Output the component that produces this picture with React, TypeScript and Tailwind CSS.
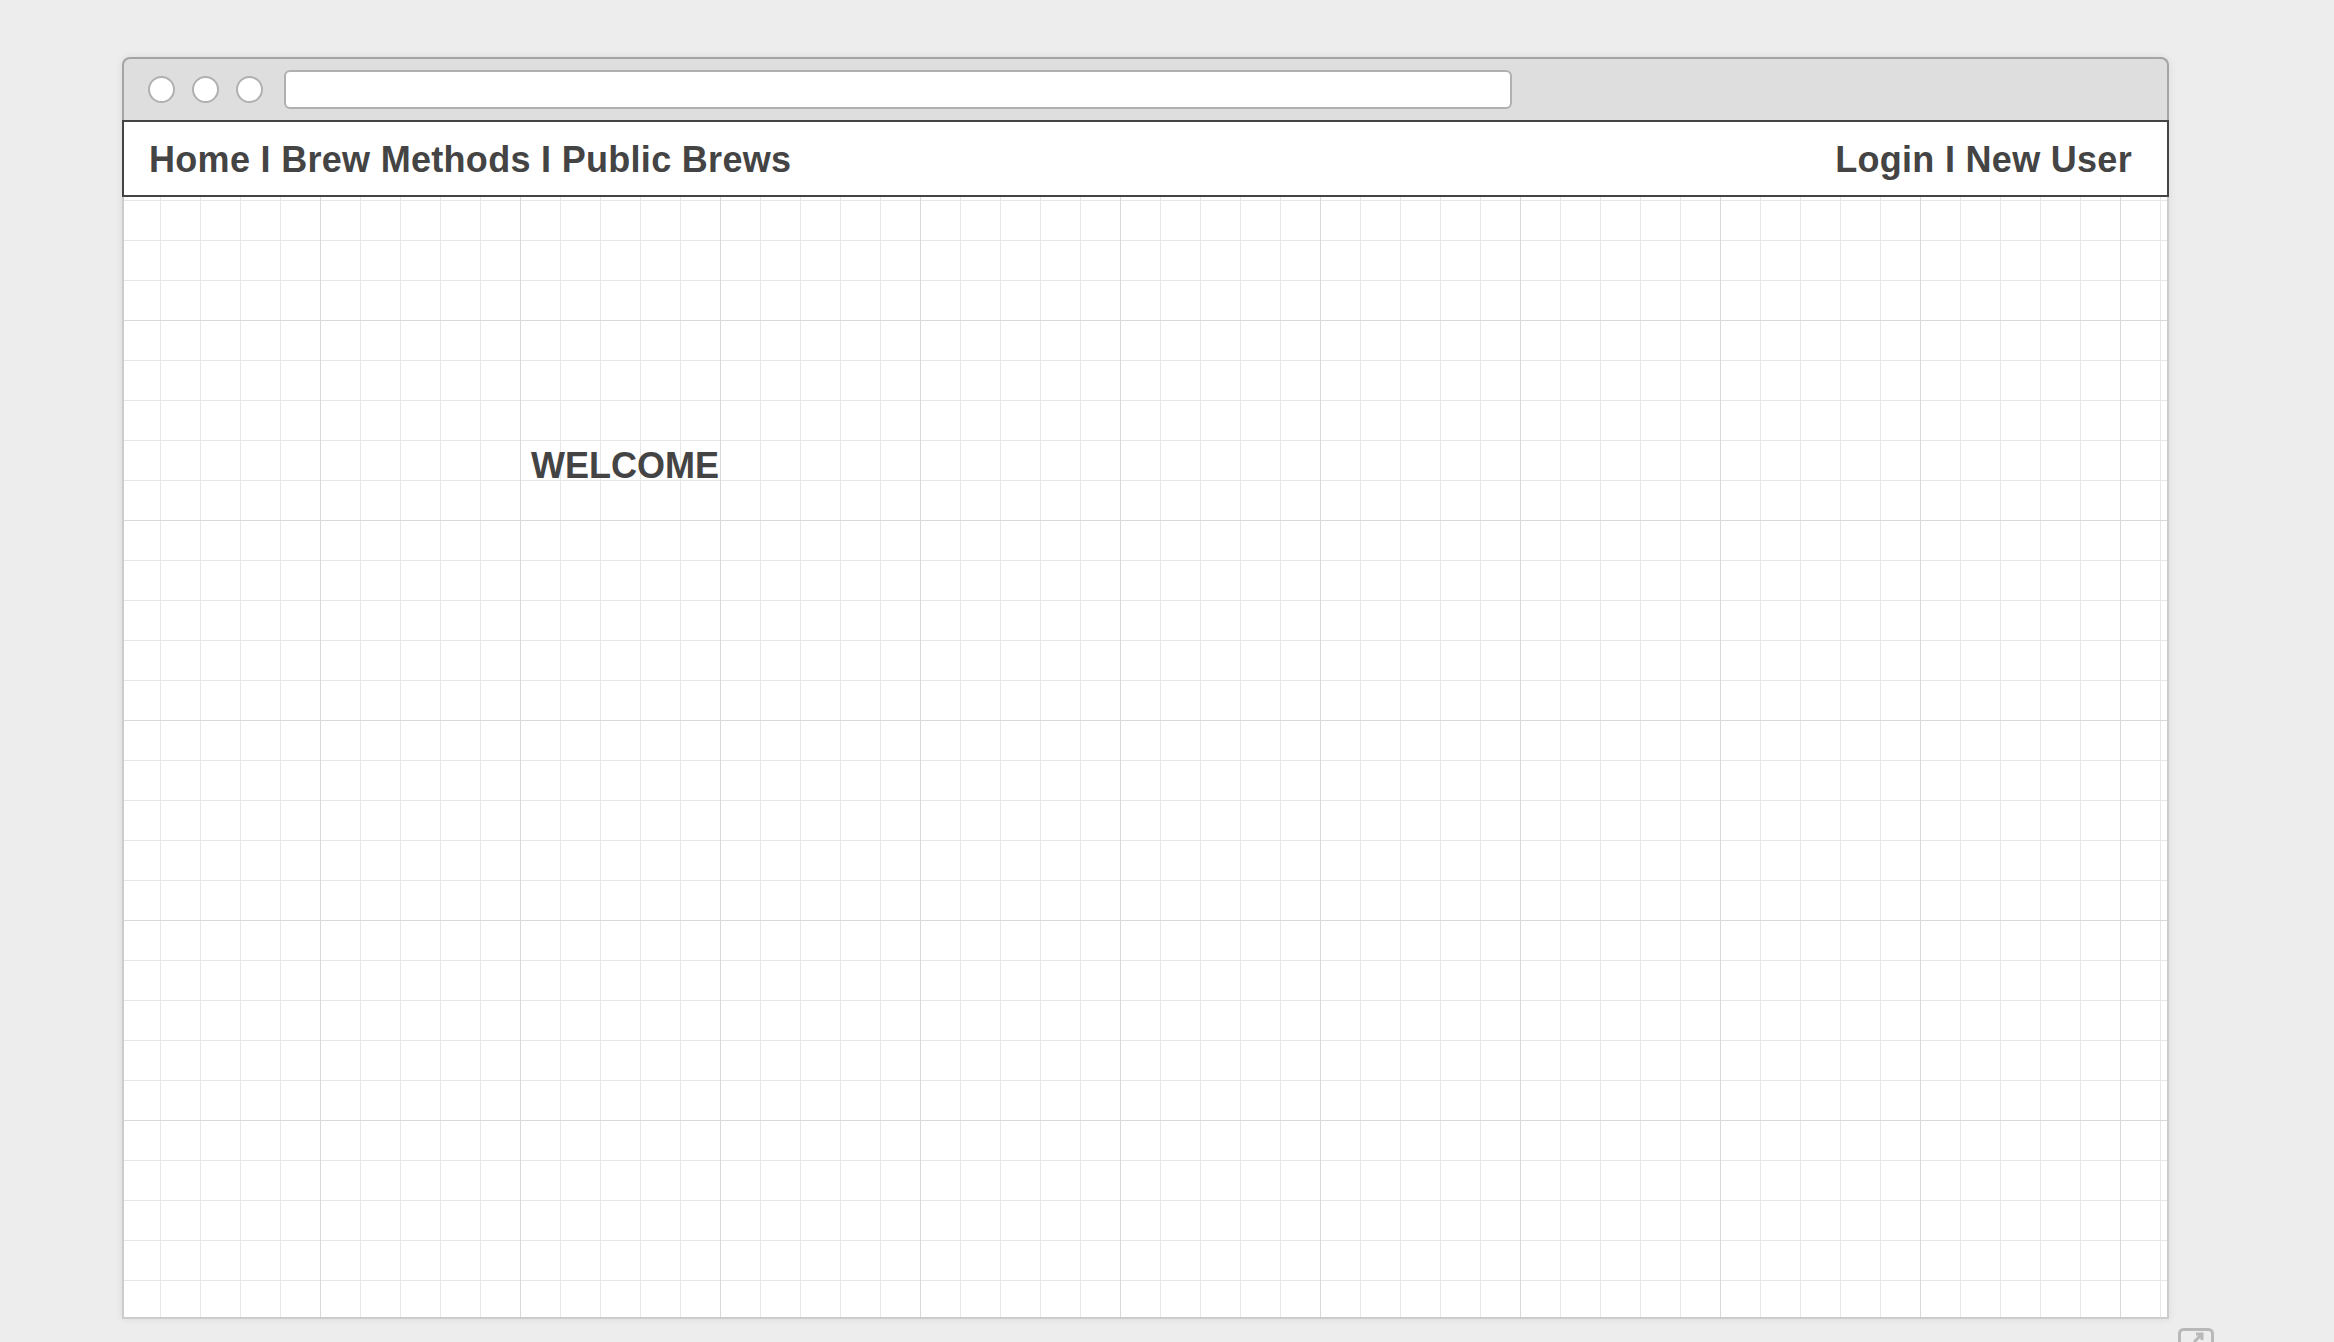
import React from 'react';

const font = { fontFamily: '"Liberation Sans", Arial, sans-serif' };

function TitleBar() {
  return (
    <div className="flex h-[63px] items-center rounded-t-[8px] border-2 border-b-0 border-[#a4a4a4] bg-[#dedede] pl-[24px]">
      {/* Window buttons */}
      <div className="flex gap-[17px]">
        {[0, 1, 2].map((i) => (
          <span key={i} className="block h-[27px] w-[27px] rounded-full border-2 border-[#b0b0b0] bg-white" />
        ))}
      </div>
      {/* Address bar */}
      <div className="ml-[21px] h-[39px] w-[1228px] rounded-[6px] border-2 border-[#b0b0b0] bg-white" />
    </div>
  );
}

function NavBar() {
  return (
    <div
      className="flex h-[77px] items-center justify-between border-2 border-[#444444] bg-white pl-[25px] pr-[35px] pt-[2px] text-[36px] leading-[36px] font-bold tracking-[0.3px] text-[#444444]"
      style={font}
    >
      <span>Home I Brew Methods I Public Brews</span>
      <span>Login I New User</span>
    </div>
  );
}

export default function App() {
  return (
    <div className="relative h-[1342px] w-full overflow-hidden bg-[#ededed]">
      <div className="ml-[122px] w-[2047px] pt-[57px]">
        <div className="shadow-[0_0_8px_rgba(0,0,0,0.08)] rounded-t-[8px]">
          <TitleBar />
          <NavBar />
          {/* Canvas with grid */}
          <div
            className="h-[1122px] border-x-2 border-b-2 border-t-0 border-[#cccccc] bg-white bg-[linear-gradient(to_right,#d9d9d9_1px,transparent_1px),linear-gradient(to_bottom,#d9d9d9_1px,transparent_1px),linear-gradient(to_right,#e7e7e7_1px,transparent_1px),linear-gradient(to_bottom,#e7e7e7_1px,transparent_1px)] bg-[size:200px_200px,200px_200px,40px_40px,40px_40px] bg-[position:196px_0,0_123px,36px_0,0_3px] pl-[407px] pt-[251px]"
          >
            <h1 className="text-[36px] leading-[36px] font-bold text-[#444444]" style={font}>
              WELCOME
            </h1>
          </div>
        </div>
      </div>

      {/* Resize / expand badge at the corner */}
      <svg className="absolute left-[2178px] top-[1328px]" width="36" height="30" viewBox="0 0 36 30" fill="none">
        <rect x="1.5" y="1.5" width="33" height="30" rx="4" stroke="#b8b8b8" strokeWidth="3" />
        <path d="M16 14 L24 6 M18 6 H24 V12" stroke="#b8b8b8" strokeWidth="3" />
      </svg>
    </div>
  );
}
